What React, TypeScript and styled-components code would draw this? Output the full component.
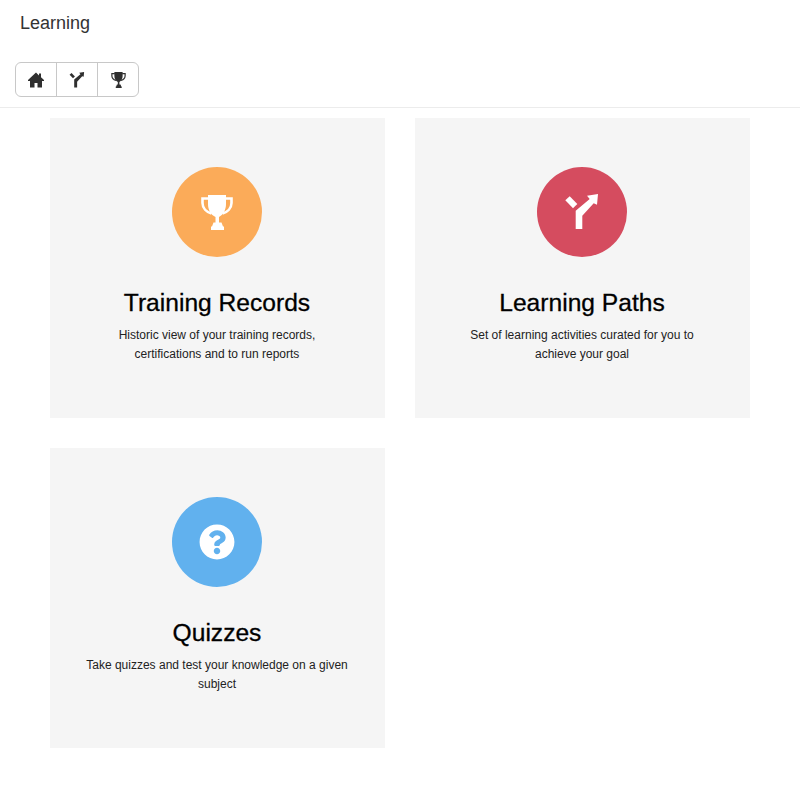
import React from "react";
import styled, { createGlobalStyle } from "styled-components";
import { FaQuestionCircle } from "react-icons/fa";

const GlobalStyle = createGlobalStyle`
  html, body {
    margin: 0;
    padding: 0;
    background: #ffffff;
    font-family: "Liberation Sans", Arial, sans-serif;
  }
`;

const Page = styled.div`
  width: 800px;
  height: 800px;
  overflow: hidden;
`;

const Header = styled.header`
  height: 108px;
  box-sizing: border-box;
  padding: 13px 15px 0;
  border-bottom: 1px solid #ececec;
`;

const PageTitle = styled.h1`
  margin: 0 0 0 5px;
  font-size: 18px;
  line-height: 21px;
  font-weight: 400;
  color: #333333;
`;

const Toolbar = styled.div`
  display: inline-flex;
  margin-top: 28px;
  height: 35px;
  box-sizing: border-box;
  border: 1px solid #c8c8c8;
  border-radius: 6px;
`;

const ToolButton = styled.button`
  width: 40px;
  padding: 0;
  display: flex;
  align-items: center;
  justify-content: center;
  background: transparent;
  border: 0;
  color: #2f2f2f;

  & + & {
    width: 41px;
    border-left: 1px solid #c8c8c8;
  }
`;

const Grid = styled.main`
  display: grid;
  grid-template-columns: 335px 335px;
  grid-auto-rows: 300px;
  column-gap: 30px;
  row-gap: 30px;
  padding: 10px 50px 0;
`;

const Card = styled.section`
  background: #f5f5f5;
  display: flex;
  flex-direction: column;
  align-items: center;
  padding: 49px 31px 0 30px;
  box-sizing: border-box;
`;

const Badge = styled.div<{ $color: string }>`
  width: 90px;
  height: 90px;
  border-radius: 50%;
  background: ${(p) => p.$color};
  color: #ffffff;
  display: flex;
  align-items: center;
  justify-content: center;
`;

const CardTitle = styled.h2`
  margin: 32px 0 0;
  font-size: 24.6px;
  line-height: 28px;
  font-weight: 400;
  color: #000000;
  -webkit-text-stroke: 0.3px #000000;
  text-align: center;
`;

const CardText = styled.p`
  margin: 9px 0 0;
  font-size: 12px;
  line-height: 19px;
  color: #222222;
  text-align: center;
`;

const HomeIcon = ({ size }: { size: number }) => (
  <svg width={size} height={size} viewBox="0 0 16 16" fill="currentColor" aria-hidden="true">
    <path d="M8 .5 0 8v1h2v6.5h4.5V11h3v4.5H14V9h2V8l-3-2.8V1.5h-2v1.9z" />
  </svg>
);

const ForkIcon = ({ size }: { size: number }) => (
  <svg width={size} height={size} viewBox="0 0 36 36" fill="currentColor" aria-hidden="true">
    <path d="M1.300 6.300 5.700 2.300 13.300 10 9 14.300z" />
    <path d="M11.700 35V16.700L25.700 5 23 1.700 34 0l-1 10.700-3.300-1.400L18.300 21.700V35z" />
  </svg>
);

const TrophyIcon = ({ width, height }: { width: number; height: number }) => (
  <svg width={width} height={height} viewBox="0 0 32 35" aria-hidden="true">
    <path
      d="M8 3.500H1.500V8c0 5 4 9 9 10.500M24 3.500h6.500V8c0 5-4 9-9 10.500"
      fill="none"
      stroke="currentColor"
      strokeWidth="2.6"
    />
    <path
      fill="currentColor"
      d="M7 0h18v9c0 6-3 11-7 13v5.500h2.500l1.500 4H23V35H10v-3.500h1l1.500-4H14.500V22c-4.500-2-7.500-7-7.500-13z"
    />
  </svg>
);

export default function App() {
  return (
    <Page>
      <GlobalStyle />
      <Header>
        <PageTitle>Learning</PageTitle>
        <Toolbar>
          <ToolButton aria-label="Home"><HomeIcon size={16} /></ToolButton>
          <ToolButton aria-label="Learning Paths"><ForkIcon size={16} /></ToolButton>
          <ToolButton aria-label="Training Records"><TrophyIcon width={15} height={16} /></ToolButton>
        </Toolbar>
      </Header>
      <Grid>
        <Card>
          <Badge $color="#fbab59"><TrophyIcon width={32} height={35} /></Badge>
          <CardTitle>Training Records</CardTitle>
          <CardText>
            Historic view of your training records,
            <br />
            certifications and to run reports
          </CardText>
        </Card>
        <Card>
          <Badge $color="#d54c5f"><ForkIcon size={36} /></Badge>
          <CardTitle>Learning Paths</CardTitle>
          <CardText>
            Set of learning activities curated for you to
            <br />
            achieve your goal
          </CardText>
        </Card>
        <Card>
          <Badge $color="#61b1ee"><FaQuestionCircle size={36} /></Badge>
          <CardTitle>Quizzes</CardTitle>
          <CardText>
            Take quizzes and test your knowledge on a given
            <br />
            subject
          </CardText>
        </Card>
      </Grid>
    </Page>
  );
}
